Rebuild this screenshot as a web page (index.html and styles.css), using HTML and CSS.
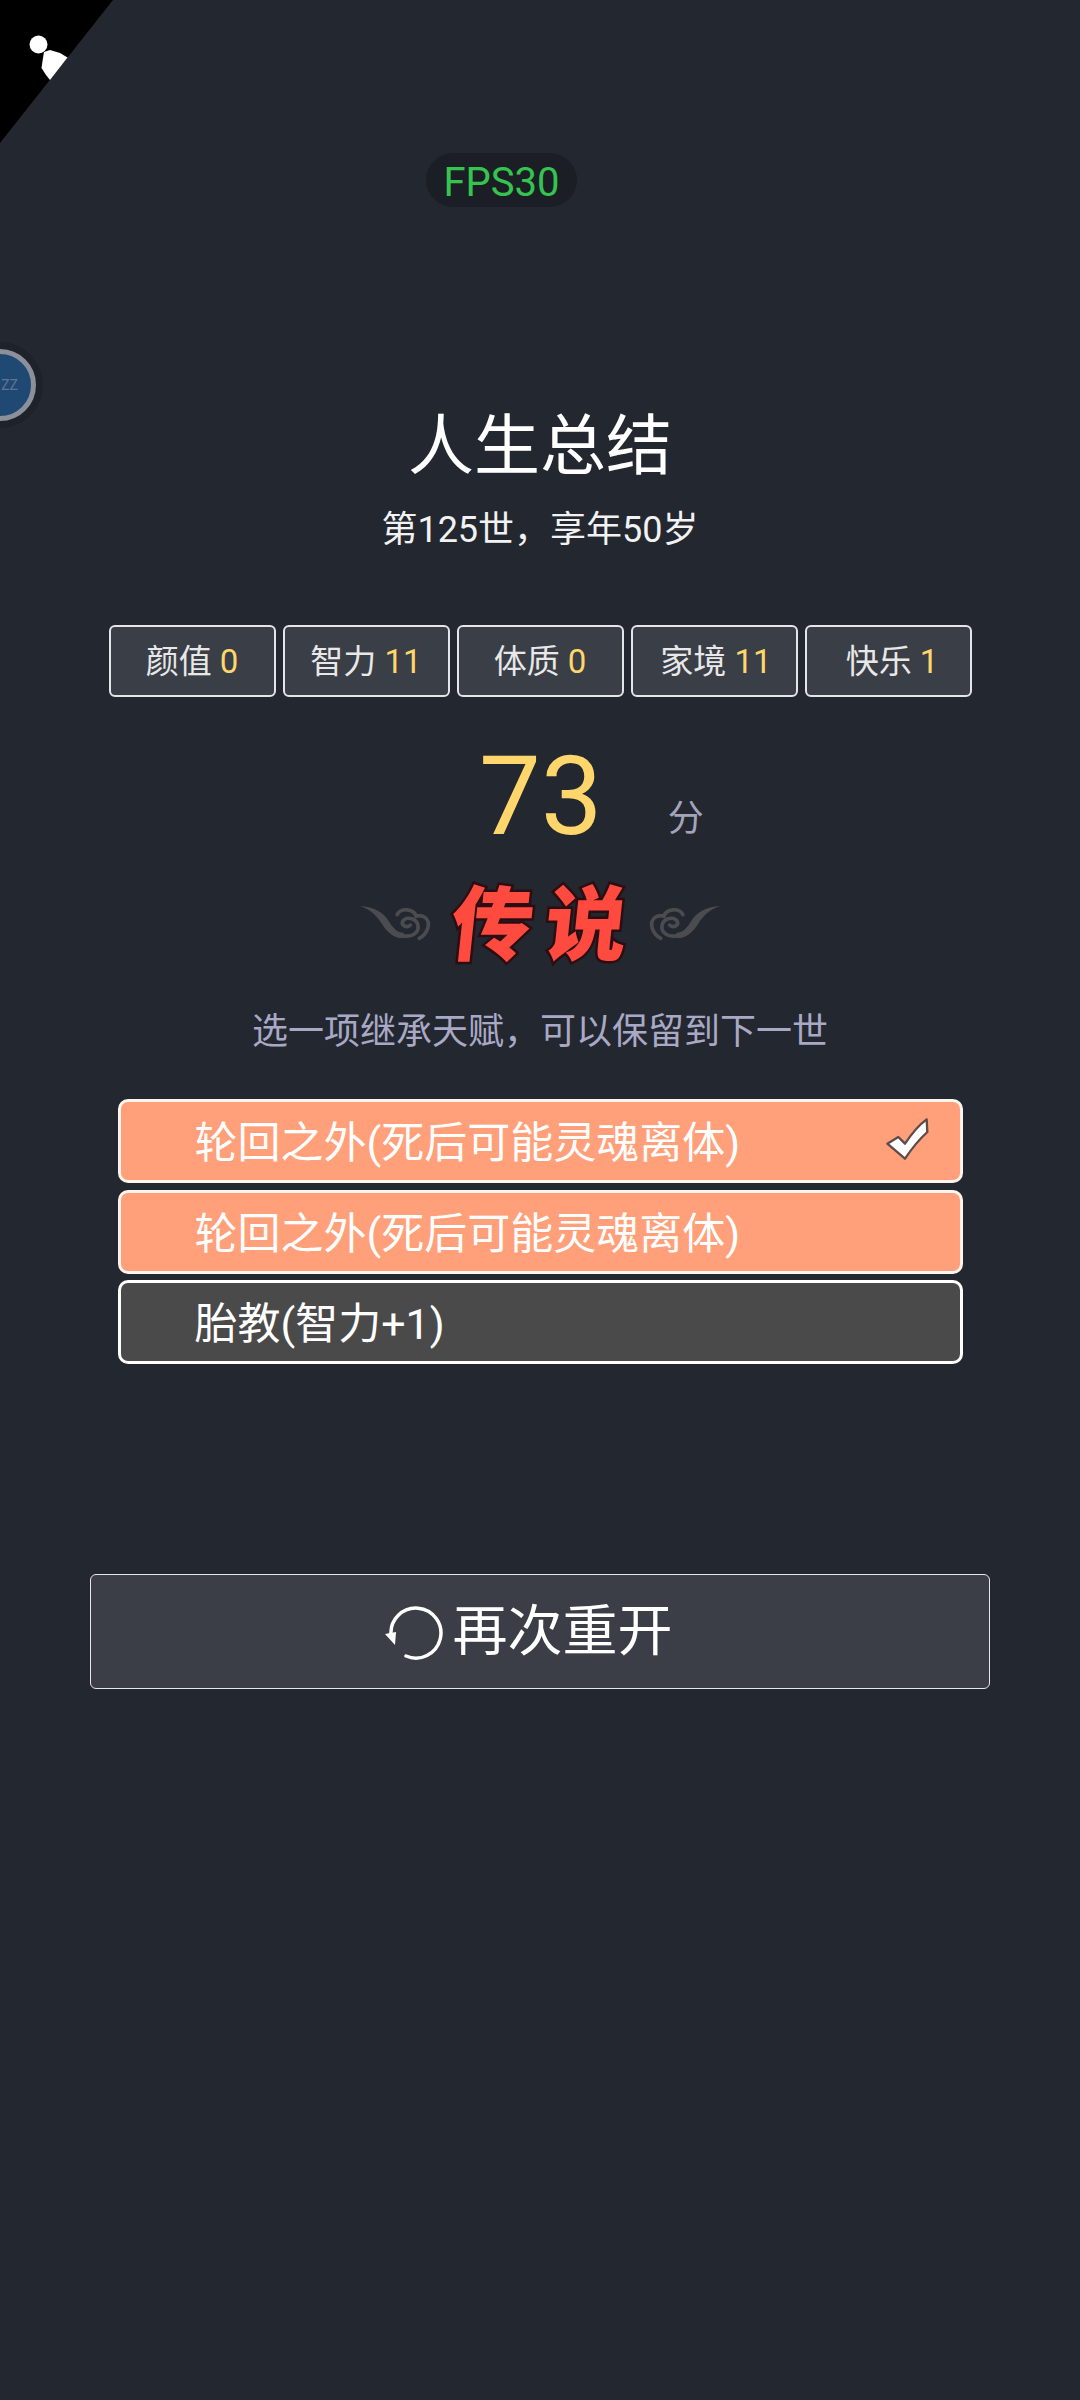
FILE: index.html
```html
<!DOCTYPE html>
<html lang="zh-CN">
<head>
<meta charset="utf-8">
<title>人生总结</title>
<link rel="stylesheet" href="styles.css">
</head>
<body>
<svg class="ribbon" viewBox="0 0 113 143" aria-hidden="true">
  <polygon points="0,0 113,0 0,143" fill="#000"/>
  <circle cx="38.500" cy="44.500" r="9" fill="#fff"/>
  <path d="M44 52 L50 50 L60 53 L67.500 57.500 L50 80 L46 75 L41.500 68 L43 58 Z" fill="#fff"/>
</svg>
<div class="fps">FPS30</div>
<div class="float-btn"><span class="float-label">ZZ</span></div>

<main class="page">
  <h1 class="title">人生总结</h1>
  <p class="subtitle">第125世，享年50岁</p>

  <ul class="stats">
    <li class="stat">颜值 <b class="stat-num">0</b></li>
    <li class="stat">智力 <b class="stat-num">11</b></li>
    <li class="stat">体质 <b class="stat-num">0</b></li>
    <li class="stat stat-nudge-small">家境 <b class="stat-num">11</b></li>
    <li class="stat stat-nudge-large">快乐 <b class="stat-num">1</b></li>
  </ul>

  <div class="score">
    <span class="score-num">73</span>
    <span class="score-unit">分</span>
  </div>

  <div class="grade">
    <svg class="cloud" viewBox="90 125 220 115" aria-hidden="true">
      <path class="cloud-fill" d="M93 134 C130 136 162 150 180 180 C192 200 205 215 225 215 L222 232 C195 232 172 210 160 190 C145 165 125 145 93 134 Z"/>
      <path class="cloud-line" d="M222 224 C250 230 272 215 268 192 C262 170 232 165 222 180 C216 192 232 202 245 192"/>
      <path class="cloud-line" d="M205 160 C215 140 255 140 262 165 C285 158 305 175 298 200 C294 215 285 225 272 232"/>
    </svg>
    <span class="grade-text">传说</span>
    <svg class="cloud cloud-right" viewBox="90 125 220 115" aria-hidden="true">
      <path class="cloud-fill" d="M93 134 C130 136 162 150 180 180 C192 200 205 215 225 215 L222 232 C195 232 172 210 160 190 C145 165 125 145 93 134 Z"/>
      <path class="cloud-line" d="M222 224 C250 230 272 215 268 192 C262 170 232 165 222 180 C216 192 232 202 245 192"/>
      <path class="cloud-line" d="M205 160 C215 140 255 140 262 165 C285 158 305 175 298 200 C294 215 285 225 272 232"/>
    </svg>
  </div>

  <p class="hint">选一项继承天赋，可以保留到下一世</p>

  <ul class="options">
    <li class="option option-hi">
      <span>轮回之外(死后可能灵魂离体)</span>
      <svg class="check" viewBox="45 55 135 132" aria-hidden="true">
        <path d="M52 135 L85 115 L105 135 C125 105 145 80 170 62 L172 100 C150 120 125 150 105 180 Z" fill="#fff" stroke="#5f4c4a" stroke-width="7" stroke-linejoin="round"/>
      </svg>
    </li>
    <li class="option option-hi"><span>轮回之外(死后可能灵魂离体)</span></li>
    <li class="option"><span>胎教(智力+1)</span></li>
  </ul>

  <button class="restart" type="button">
    <svg class="restart-icon" viewBox="0 0 60 60" aria-hidden="true">
      <path d="M23 54 A25 25 0 1 0 8 33" fill="none" stroke="#fff" stroke-width="3.500" stroke-linecap="round"/>
      <path d="M2 32 L13 30 L12 43 Z" fill="#fff"/>
    </svg>
    <span>再次重开</span>
  </button>
</main>
</body>
</html>
```

FILE: styles.css
```css
* {
  box-sizing: border-box;
}

html,
body {
  margin: 0;
  padding: 0;
}

body {
  position: relative;
  width: 1080px;
  height: 2400px;
  overflow: hidden;
  background: #232730;
  color: #fff;
  font-family: "Roboto", "Noto Sans CJK SC", sans-serif;
}

.ribbon {
  position: absolute;
  left: 0;
  top: 0;
  width: 113px;
  height: 143px;
}

.fps {
  position: absolute;
  left: 426px;
  top: 153px;
  width: 151px;
  height: 54px;
  padding-top: 3px;
  border-radius: 27px;
  background: #1b1f25;
  color: #35c44f;
  font-size: 40px;
  line-height: 54px;
  text-align: center;
}

.float-btn {
  position: absolute;
  left: -36px;
  top: 349px;
  width: 72px;
  height: 72px;
  border: 5px solid #8b909b;
  border-radius: 50%;
  background: #1f4873;
  box-shadow: 0 0 0 7px #1e222a;
  display: flex;
  align-items: center;
  justify-content: flex-end;
  padding-right: 13px;
}

.float-label {
  color: #5f7690;
  font-size: 14px;
  line-height: 1;
}

.page {
  display: flex;
  flex-direction: column;
  align-items: center;
  padding-top: 407px;
}

.title {
  margin: 0;
  font-size: 66px;
  font-weight: 400;
  line-height: 80px;
}

.subtitle {
  margin: 18px 0 0;
  font-size: 36px;
  line-height: 50px;
  color: #f2f2f2;
}

.stats {
  display: flex;
  gap: 7px;
  margin: 70px 0 0;
  padding: 0;
  list-style: none;
}

.stat {
  width: 167px;
  height: 72px;
  border: 2px solid #e4e5e8;
  border-radius: 6px;
  background: #3a3e47;
  color: #e8e8e8;
  font-size: 33px;
  line-height: 70px;
  text-align: center;
  white-space: pre;
}

.stat-nudge-small {
  padding-left: 4px;
}

.stat-nudge-large {
  padding-left: 8px;
}

.stat-num {
  color: #ffd66b;
  font-weight: 400;
}

.score {
  display: flex;
  align-items: flex-end;
  align-self: flex-start;
  gap: 65px;
  margin-top: 45px;
  padding-left: 479px;
  height: 110px;
}

.score-num {
  color: #ffd66b;
  font-size: 110px;
  line-height: 110px;
}

.score-unit {
  color: #a3a3bb;
  font-size: 36px;
  line-height: 50px;
  margin-bottom: 8px;
}

.grade {
  display: flex;
  align-items: center;
  justify-content: center;
  gap: 20px;
  margin-top: 22px;
  height: 90px;
}

.cloud {
  width: 73px;
  height: 38px;
  margin-top: 6px;
}

.cloud-right {
  transform: scaleX(-1);
}

.cloud-fill {
  fill: #4b4c4f;
}

.cloud-line {
  fill: none;
  stroke: #4b4c4f;
  stroke-width: 11;
  stroke-linecap: round;
}

.grade-text {
  color: #ff4a40;
  font-family: "Noto Sans CJK SC", sans-serif;
  font-size: 82px;
  font-weight: 900;
  line-height: 90px;
  letter-spacing: 12px;
  margin-right: -12px;
  -webkit-text-stroke: 5px #2c0e12;
  paint-order: stroke fill;
  transform: skewX(-6deg);
}

.hint {
  margin: 43px 0 0;
  color: #a9a9c6;
  font-size: 36px;
  line-height: 50px;
}

.options {
  display: flex;
  flex-direction: column;
  gap: 6.500px;
  width: 845px;
  margin: 42px 0 0;
  padding: 0;
  list-style: none;
}

.option {
  display: flex;
  align-items: center;
  justify-content: space-between;
  height: 84px;
  padding: 0 30px 4px 74px;
  border: 3px solid #fff;
  border-radius: 10px;
  background: #4a4a4a;
  color: #fff;
  font-size: 43px;
}

.option-hi {
  background: #ffa07a;
  border-color: #fff4ee;
}

.check {
  width: 45px;
  height: 44px;
}

.restart {
  display: flex;
  align-items: center;
  justify-content: center;
  gap: 9px;
  width: 900px;
  height: 115px;
  margin-top: 210px;
  padding: 0 24px 0 0;
  border: 1.500px solid #e6e7ea;
  border-radius: 6px;
  background: #3b3e46;
  color: #fff;
  font-family: inherit;
  font-size: 55px;
  line-height: 1;
}

.restart-icon {
  width: 60px;
  height: 60px;
}
```
